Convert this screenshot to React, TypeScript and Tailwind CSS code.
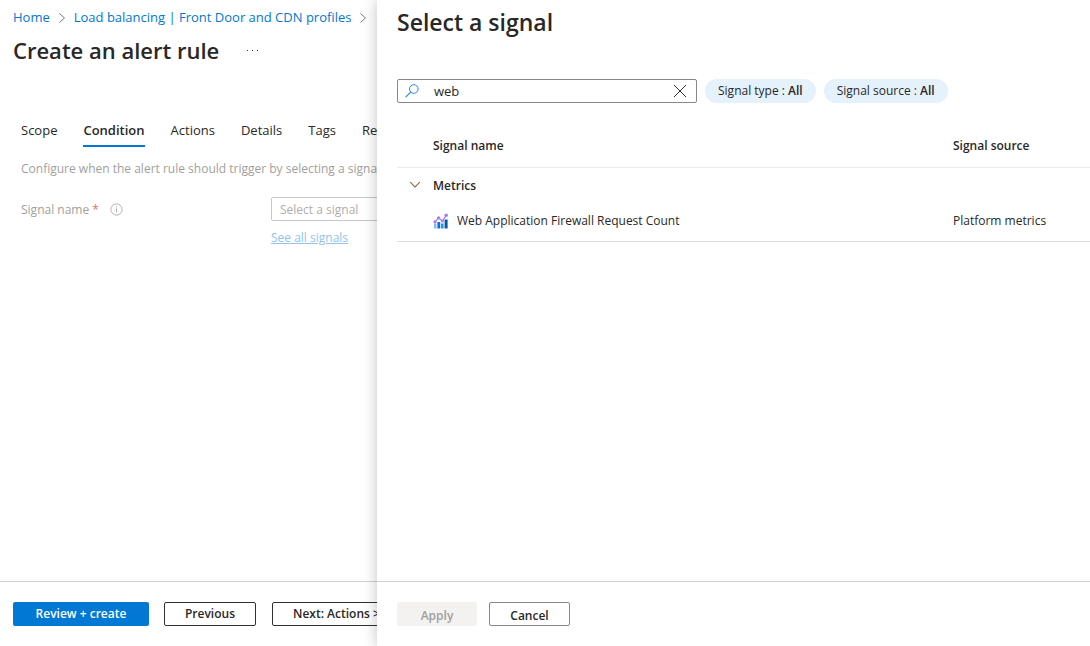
import { useState } from 'react'

type Signal = {
  id: string
  name: string
  source: string
}

const tabs = [
  { id: 'scope', label: 'Scope' },
  { id: 'condition', label: 'Condition' },
  { id: 'actions', label: 'Actions' },
  { id: 'details', label: 'Details' },
  { id: 'tags', label: 'Tags' },
  { id: 'review', label: 'Review + create' },
]

const signals: Signal[] = [
  { id: 'waf-count', name: 'Web Application Firewall Request Count', source: 'Platform metrics' },
]

const filters = [
  { id: 'type', label: 'Signal type', value: 'All' },
  { id: 'source', label: 'Signal source', value: 'All' },
]

function BreadcrumbArrow() {
  return (
    <svg width="8" height="12" viewBox="0 0 8 12" fill="none" stroke="#797775" className="shrink-0">
      <path d="M1.5 1.5 L6.5 6 L1.5 10.5" />
    </svg>
  )
}

function InfoIcon() {
  return (
    <svg width="13" height="13" viewBox="0 0 13 13" fill="none" stroke="#b3b0ad" className="shrink-0">
      <circle cx="6.5" cy="6.5" r="5.6" />
      <path d="M6.5 5.5 V9.5 M6.5 3.4 V4.5" />
    </svg>
  )
}

function SearchIcon() {
  return (
    <svg width="14" height="14" viewBox="0 0 14 14" fill="none" stroke="#2b8add" className="shrink-0">
      <circle cx="8.8" cy="5" r="4.3" />
      <path d="M5.7 8.1 L0.6 13.2" strokeWidth="1.2" />
    </svg>
  )
}

function ClearIcon() {
  return (
    <svg width="14" height="14" viewBox="0 0 14 14" fill="none" stroke="#323130">
      <path d="M1 1 L13 13 M13 1 L1 13" />
    </svg>
  )
}

function ChevronDown() {
  return (
    <svg width="12" height="8" viewBox="0 0 12 8" fill="none" stroke="#8e6a4e" strokeWidth="1.1">
      <path d="M1.2 1.2 L6 6 L10.8 1.2" />
    </svg>
  )
}

function MetricsIcon() {
  return (
    <svg width="16" height="16" viewBox="0 0 16 16" className="shrink-0">
      <rect x="1" y="10.5" width="2.4" height="5" fill="#83b9f9" />
      <rect x="4.4" y="9" width="2.8" height="6.5" fill="#0078d4" />
      <rect x="8" y="10.5" width="2.6" height="5" fill="#2f8fe0" />
      <rect x="11.6" y="6.5" width="3" height="9" fill="#005ba1" />
      <path d="M2 8.8 L5.6 4.8 L9.4 8 L13.2 2.3" fill="none" stroke="#a67af4" strokeWidth="1.2" />
      <circle cx="2" cy="8.8" r="1.6" fill="#a67af4" />
      <circle cx="5.6" cy="4.8" r="1.6" fill="#a67af4" />
      <circle cx="9.4" cy="8" r="1.5" fill="#a67af4" />
      <circle cx="13.2" cy="2.3" r="1.7" fill="#a67af4" />
    </svg>
  )
}

function AlertRulePage() {
  return (
    <main className="flex min-w-0 flex-col overflow-hidden whitespace-nowrap">
      <nav aria-label="Breadcrumb" className="flex h-8 items-center gap-2 pt-1 pl-[13px] text-[13px] text-[#0078d4]">
        <a href="#home">Home</a>
        <BreadcrumbArrow />
        <a href="#profiles">Load balancing | Front Door and CDN profiles</a>
        <BreadcrumbArrow />
      </nav>

      <header className="flex h-9 items-center gap-[26px] pl-[13px]">
        <h1 className="text-[22px] font-semibold">Create an alert rule</h1>
        <button aria-label="More options" className="flex gap-1 p-0.5">
          <span className="size-px bg-[#323130]"></span>
          <span className="size-px bg-[#323130]"></span>
          <span className="size-px bg-[#323130]"></span>
        </button>
      </header>

      {/* Wizard steps */}
      <div role="tablist" className="mt-12 flex gap-[26px] pl-[21px] text-[13px]">
        {tabs.map((tab) => (
          <button
            key={tab.id}
            role="tab"
            aria-selected={tab.id === 'condition'}
            className={
              tab.id === 'condition'
                ? 'h-[31px] border-b-2 border-[#0078d4] font-semibold'
                : 'h-[31px] border-b-2 border-transparent'
            }
          >
            {tab.label}
          </button>
        ))}
      </div>

      <section className="flex-1 pt-3 pl-[21px] text-[12px] text-[#a19f9d]">
        <p className="leading-5">Configure when the alert rule should trigger by selecting a signal and defining its logic.</p>
        <div className="mt-[18px] flex items-center">
          <div className="flex w-[250px] shrink-0 items-center gap-[11px] pt-px">
            <label htmlFor="signal">
              Signal name <span className="text-[#d9747a]">*</span>
            </label>
            <InfoIcon />
          </div>
          <input
            id="signal"
            placeholder="Select a signal"
            className="h-6 w-[300px] shrink-0 rounded-xs border border-[#c8c6c4] px-2 placeholder:text-[#b0aeac]"
          />
        </div>
        <a href="#signals" className="mt-[7px] ml-[250px] inline-block leading-5 text-[#8ec5ee] underline">
          See all signals
        </a>
      </section>

      <footer className="flex h-[65px] shrink-0 items-start border-t border-[#d2d0ce] pt-5 pl-[13px] text-[12px] font-semibold">
        <button className="h-6 w-[136px] shrink-0 rounded-xs bg-[#0078d4] text-white">Review + create</button>
        <button className="ml-[15px] h-6 w-[92px] shrink-0 rounded-xs border border-[#323130]">Previous</button>
        <button className="ml-4 h-6 shrink-0 rounded-xs border border-[#323130] px-5">Next: Actions &gt;</button>
      </footer>
    </main>
  )
}

function SignalPanel() {
  const [query, setQuery] = useState('web')
  const [expanded, setExpanded] = useState(true)

  const visible = signals.filter((s) => s.name.toLowerCase().includes(query.toLowerCase()))

  return (
    <aside className="relative flex min-w-0 flex-col bg-white shadow-[0_0_14px_rgba(0,0,0,0.24)]">
      <h2 className="pt-1.5 pl-5 text-[23px] leading-8 font-semibold">Select a signal</h2>

      {/* Search and filters */}
      <div className="mt-[41px] flex gap-2 pl-5 text-[13px]">
        <div className="flex h-6 w-[300px] items-center rounded-xs border border-[#8a8886] pr-[9px] pl-[7px]">
          <SearchIcon />
          <input
            aria-label="Search signals"
            value={query}
            onChange={(e) => setQuery(e.target.value)}
            className="ml-[15px] min-w-0 flex-1 pt-px outline-none"
          />
          <button aria-label="Clear search" onClick={() => setQuery('')}>
            <ClearIcon />
          </button>
        </div>
        {filters.map((filter) => (
          <button key={filter.id} className="h-6 rounded-full bg-[#e5f1fb] px-[13px] text-[12px] whitespace-nowrap">
            {filter.label} : <span className="font-semibold">{filter.value}</span>
          </button>
        ))}
      </div>

      {/* Signals */}
      <div className="mt-5 flex-1 pl-5">
        <table className="w-full table-fixed text-left text-[12px]">
          <colgroup>
            <col className="w-9" />
            <col />
            <col className="w-[137px]" />
          </colgroup>
          <thead>
            <tr className="h-11 border-b border-[#edebe9]">
              <td></td>
              <th className="pt-0.5 font-semibold">Signal name</th>
              <th className="pt-0.5 font-semibold">Signal source</th>
            </tr>
          </thead>
          <tbody>
            <tr className="h-[35px]">
              <td className="pl-3">
                <button aria-label="Toggle metrics" onClick={() => setExpanded(!expanded)} className="block">
                  <ChevronDown />
                </button>
              </td>
              <th colSpan={2} className="pt-0.5 font-semibold">Metrics</th>
            </tr>
            {expanded && visible.map((signal) => (
              <tr key={signal.id} className="h-[39px] border-b border-[#e1dfdd]">
                <td></td>
                <td className="pb-px">
                  <div className="flex items-center gap-2">
                    <MetricsIcon />
                    <span>{signal.name}</span>
                  </div>
                </td>
                <td className="pb-px">{signal.source}</td>
              </tr>
            ))}
          </tbody>
        </table>
      </div>

      <footer className="flex h-[65px] shrink-0 items-start gap-3 border-t border-[#d2d0ce] pt-5 pl-5 text-[12px] font-semibold">
        <button disabled className="h-6 w-20 rounded-xs bg-[#f3f2f1] pt-[3px] text-[#a19f9d]">Apply</button>
        <button className="h-6 w-[81px] rounded-xs border border-[#8a8886] pt-[3px]">Cancel</button>
      </footer>
    </aside>
  )
}

function App() {
  return (
    <div className="grid min-h-screen grid-cols-[minmax(0,377fr)_minmax(0,713fr)] overflow-hidden bg-white font-['Open_Sans','Noto_Sans',sans-serif] text-[#292827]">
      <AlertRulePage />
      <SignalPanel />
    </div>
  )
}

export default App
